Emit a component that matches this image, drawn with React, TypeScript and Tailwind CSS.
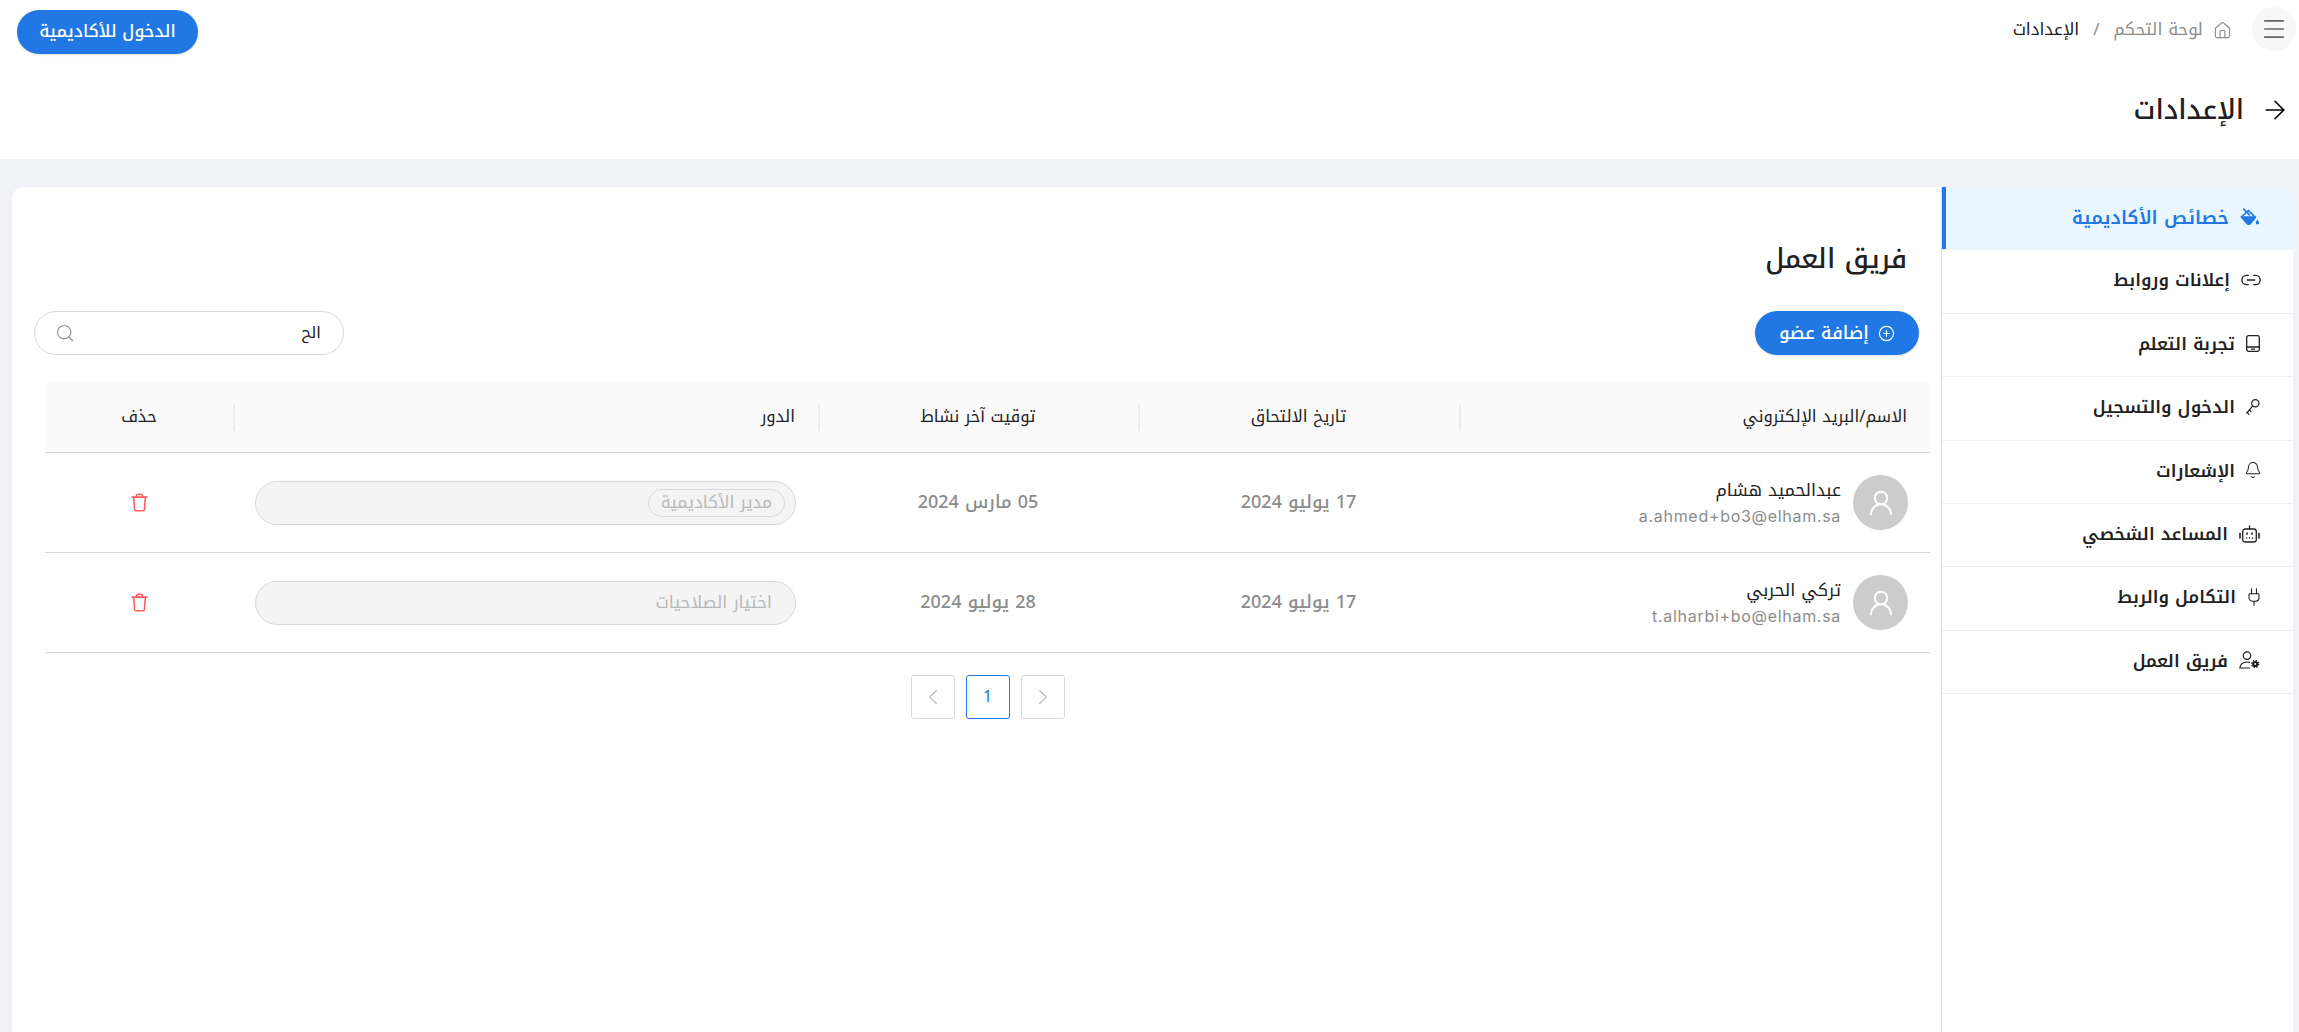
import React from "react";
import { ArrowRight, Bell, ChevronLeft, ChevronRight, CirclePlus, House, Link2, Menu, Plug, Search, UserRound } from "lucide-react";

function BucketIcon() {
  return (
    <svg width="20" height="18" viewBox="0 0 20 18" fill="none" stroke="currentColor" strokeWidth="1.7" strokeLinejoin="round" strokeLinecap="round">
      <path d="M1.5 9 8.5 2.5l6.8 6.8-5.2 6.2a1.8 1.8 0 0 1-2.7 0Z" />
      <path d="M1.5 9h13.8l-5.2 6.5a1.8 1.8 0 0 1-2.7 0Z" fill="currentColor" />
      <path d="M3.8 1.2l5.5 5.6" />
      <path d="M17.4 11.5c.9 1.3 1.7 2.2 1.7 3.2a1.7 1.7 0 0 1-3.4 0c0-1 .8-1.9 1.7-3.2Z" fill="currentColor" stroke="none" />
    </svg>
  );
}

function TabletIcon() {
  return (
    <svg width="14" height="17" viewBox="0 0 14 17" fill="none" stroke="currentColor" strokeWidth="1.3" strokeLinecap="round">
      <rect x=".7" y=".7" width="12.6" height="15.6" rx="1.8" />
      <path d="M.7 12h12.6" />
      <path d="M5.5 14.2h3" />
    </svg>
  );
}

function KeyIcon() {
  return (
    <svg width="15" height="18" viewBox="0 0 15 18" fill="none" stroke="currentColor" strokeWidth="1.3" strokeLinecap="round" strokeLinejoin="round">
      <circle cx="10" cy="5" r="3.9" />
      <path d="M7.2 7.9 1 15.2" />
      <path d="M1.2 14.9l2 2" />
      <path d="M3.6 12.2l1.8 1.8" />
    </svg>
  );
}

function RobotIcon() {
  return (
    <svg width="21" height="18" viewBox="0 0 21 18" fill="none" stroke="currentColor" strokeWidth="1.3" strokeLinecap="round">
      <rect x="3.7" y="4" width="13.6" height="13" rx="2.6" />
      <path d="M10.5 4V1" />
      <path d="M1 8.5v4.5" strokeWidth="1.6" />
      <path d="M20 8.5v4.5" strokeWidth="1.6" />
      <path d="M8 8v1.2M13 8v1.2" strokeWidth="1.5" />
      <path d="M7.5 13h.01M10.5 13h.01M13.5 13h.01" strokeWidth="1.5" />
    </svg>
  );
}

function UserGearIcon() {
  return (
    <svg width="21" height="18" viewBox="0 0 21 18" fill="none" stroke="currentColor" strokeWidth="1.2" strokeLinecap="round">
      <circle cx="8" cy="4.6" r="3.8" />
      <path d="M.8 17c0-3.6 3.2-6 7.2-6 .9 0 1.8.1 2.6.4M.8 17h10" />
      <circle cx="16.2" cy="13" r="2" strokeWidth="2.2" />
      <circle cx="16.2" cy="13" r="3.5" strokeWidth="1.4" strokeDasharray="1.4 1.35" strokeLinecap="butt" />
    </svg>
  );
}

function TrashIcon() {
  return (
    <svg width="17" height="19" viewBox="0 0 19 21" fill="none" stroke="currentColor" strokeWidth="1.7" strokeLinecap="round" strokeLinejoin="round">
      <path d="M1.2 4.5h16.6" />
      <path d="M3 4.5l1 13.8a1.5 1.5 0 0 0 1.5 1.4h8a1.5 1.5 0 0 0 1.5-1.4l1-13.8" />
      <path d="M6 4.5V3.5A2.4 2.4 0 0 1 8.4 1.2h2.2A2.4 2.4 0 0 1 13 3.5v1" />
    </svg>
  );
}

const navItems = [
  { label: "خصائص الأكاديمية", icon: <BucketIcon />, box: "w-[20px]", active: true },
  { label: "إعلانات وروابط", icon: <Link2 size={22} strokeWidth={1.5} className="shrink-0" />, box: "w-[19px]" },
  { label: "تجربة التعلم", icon: <TabletIcon />, box: "w-[14px]" },
  { label: "الدخول والتسجيل", icon: <KeyIcon />, box: "w-[14px]" },
  { label: "الإشعارات", icon: <Bell size={18} strokeWidth={1.4} className="shrink-0" />, box: "w-[14px]" },
  { label: "المساعد الشخصي", icon: <RobotIcon />, box: "w-[21px]" },
  { label: "التكامل والربط", icon: <Plug size={20} strokeWidth={1.3} className="shrink-0" />, box: "w-[13px]" },
  { label: "فريق العمل", icon: <UserGearIcon />, box: "w-[21px]" },
];

const members = [
  {
    name: "عبدالحميد هشام",
    email: "a.ahmed+bo3@elham.sa",
    joined: "17 يوليو 2024",
    last: "05 مارس 2024",
    role: "مدير الأكاديمية",
  },
  {
    name: "تركي الحربي",
    email: "t.alharbi+bo@elham.sa",
    joined: "17 يوليو 2024",
    last: "28 يوليو 2024",
  },
];

const cols = "grid grid-cols-[471px_321px_320px_585px_188px]";

function HeaderCell({ children, sep = true, center = true }: { children: React.ReactNode; sep?: boolean; center?: boolean }) {
  return (
    <div className={`relative flex items-center text-[16.5px] text-[#212121] ${center ? "justify-center" : "px-[23px]"}`}>
      {children}
      {sep && <span className="absolute left-0 top-[21px] h-[27px] w-[2px] bg-[#ececec]" />}
    </div>
  );
}

function Sidebar() {
  return (
    <aside className="w-[352px] shrink-0 border-l border-[#dcdcdc] bg-white rounded-tr-xl mr-[6px]">
      {navItems.map((item) => (
        <div
          key={item.label}
          className={`h-[63.4px] flex items-center gap-[11px] pr-[33px] border-b border-[#eeeeee] font-semibold relative ${
            item.active ? "bg-[#eaf6ff] text-[#2178e4] text-[18.5px] rounded-tr-xl" : "text-[#212121] text-[17.5px]"
          }`}
        >
          <span className={`${item.box} -mt-[3px] flex justify-center shrink-0`}>{item.icon}</span>
          <span>{item.label}</span>
          {item.active && <span className="absolute left-0 top-0 bottom-0 w-[4px] bg-[#2178e4]" />}
        </div>
      ))}
    </aside>
  );
}

function MemberRow({ m }: { m: (typeof members)[number] }) {
  return (
    <div className={`${cols} h-[100px] border-b border-[#d9d9d9]`}>
      <div className="flex items-center gap-3 pr-[22px]">
        <div className="w-[55px] h-[55px] rounded-full bg-[#cccccc] flex items-center justify-center text-white">
          <UserRound size={30} strokeWidth={1.6} />
        </div>
        <div>
          <div className="text-[17.5px] leading-[26px] text-[#212121]">{m.name}</div>
          <div dir="ltr" className="text-[16px] tracking-[0.7px] leading-[24px] text-[#8c8c8c] font-['Inter',sans-serif] text-right">
            {m.email}
          </div>
        </div>
      </div>
      <div className="flex items-center justify-center text-[18px] font-medium text-[#8c8c8c]">{m.joined}</div>
      <div className="flex items-center justify-center text-[18px] font-medium text-[#8c8c8c]">{m.last}</div>
      <div className="flex items-center pr-[22px]">
        <div className="w-[541px] h-[44px] rounded-full border border-[#d9d9d9] bg-[#f4f4f4] flex items-center pr-[10px] text-[17px] text-[#b8b8b8]">
          {m.role ? (
            <span className="h-[28px] px-[12px] rounded-full border border-[#d9d9d9] flex items-center">{m.role}</span>
          ) : (
            <span className="pr-[13px]">اختيار الصلاحيات</span>
          )}
        </div>
      </div>
      <div className="flex items-center justify-center text-[#ff5a5f]">
        <TrashIcon />
      </div>
    </div>
  );
}

function PageButton({ children, active }: { children: React.ReactNode; active?: boolean }) {
  return (
    <div
      className={`w-[44px] h-[44px] rounded-[3px] border flex items-center justify-center text-[16px] ${
        active ? "border-[#2178e4] text-[#2178e4]" : "border-[#d9d9d9] text-[#bdbdbd]"
      }`}
    >
      {children}
    </div>
  );
}

export default function App() {
  return (
    <div dir="rtl" className="h-[1032px] flex flex-col bg-[#f0f2f5] font-['Noto_Kufi_Arabic','Noto_Sans',sans-serif] overflow-hidden">
      <header className="h-[159px] shrink-0 bg-white flex flex-col">
        <div className="h-[58px] flex items-center justify-between pr-[3px] pl-[17px]">
          <div className="flex items-center gap-[20px]">
            <div className="w-[44px] h-[44px] rounded-full bg-[#f7f7f7] flex items-center justify-center text-[#666]">
              <Menu size={28} strokeWidth={1.4} />
            </div>
            <div className="flex items-center gap-[14px] text-[17px] mt-[2px]">
              <span className="flex items-center gap-[10px] text-[#8c8c8c]">
                <House size={19} strokeWidth={1.4} />
                لوحة التحكم
              </span>
              <span className="text-[#8c8c8c]">/</span>
              <span className="text-[#212121]">الإعدادات</span>
            </div>
          </div>
          <button className="w-[181px] h-[44px] mt-[6px] rounded-full bg-[#2178e4] text-white text-[17px] font-medium shadow-sm">
            الدخول للأكاديمية
          </button>
        </div>
        <div className="flex items-center gap-[16px] pr-[9px] mt-[34px] text-[#212121]">
          <ArrowRight size={30} strokeWidth={1.3} className="text-black" />
          <h1 className="text-[27px] leading-[36px] font-medium">الإعدادات</h1>
        </div>
      </header>
      <div className="flex-1 flex pt-[28px]">
        <Sidebar />
        <main className="w-[1929px] bg-white rounded-tl-xl pr-[11px] pl-[33px]">
          <h2 className="text-[27px] leading-[36px] font-medium text-[#212121] pr-[23px] pt-[54px] h-[124px]">فريق العمل</h2>
          <div className="flex items-center justify-between h-[44px] -ml-[11px] mr-[11px]">
            <button className="w-[164px] h-[44px] rounded-full bg-[#2178e4] text-white text-[18px] font-medium shadow-sm flex items-center justify-center gap-[9px]">
              <CirclePlus size={17} strokeWidth={1.6} />
              إضافة عضو
            </button>
            <div className="w-[310px] h-[44px] rounded-full border border-[#d9d9d9] flex items-center justify-between pr-[22px] pl-[20px] text-[16px] text-[#212121]">
              <span>الح</span>
              <Search size={20} strokeWidth={1.4} className="text-[#8c8c8c]" />
            </div>
          </div>
          <div className="mt-[28px]">
            <div className={`${cols} h-[70px] bg-[#fafafa] border-b border-[#d9d9d9]`}>
              <HeaderCell center={false}>الاسم/البريد الإلكتروني</HeaderCell>
              <HeaderCell>تاريخ الالتحاق</HeaderCell>
              <HeaderCell>توقيت آخر نشاط</HeaderCell>
              <HeaderCell center={false}>الدور</HeaderCell>
              <HeaderCell sep={false}>حذف</HeaderCell>
            </div>
            {members.map((m) => (
              <MemberRow key={m.email} m={m} />
            ))}
          </div>
          <div className="flex justify-center gap-[11px] mt-[22px]">
            <PageButton>
              <ChevronRight size={26} strokeWidth={1.1} />
            </PageButton>
            <PageButton active>1</PageButton>
            <PageButton>
              <ChevronLeft size={26} strokeWidth={1.1} />
            </PageButton>
          </div>
        </main>
      </div>
    </div>
  );
}
